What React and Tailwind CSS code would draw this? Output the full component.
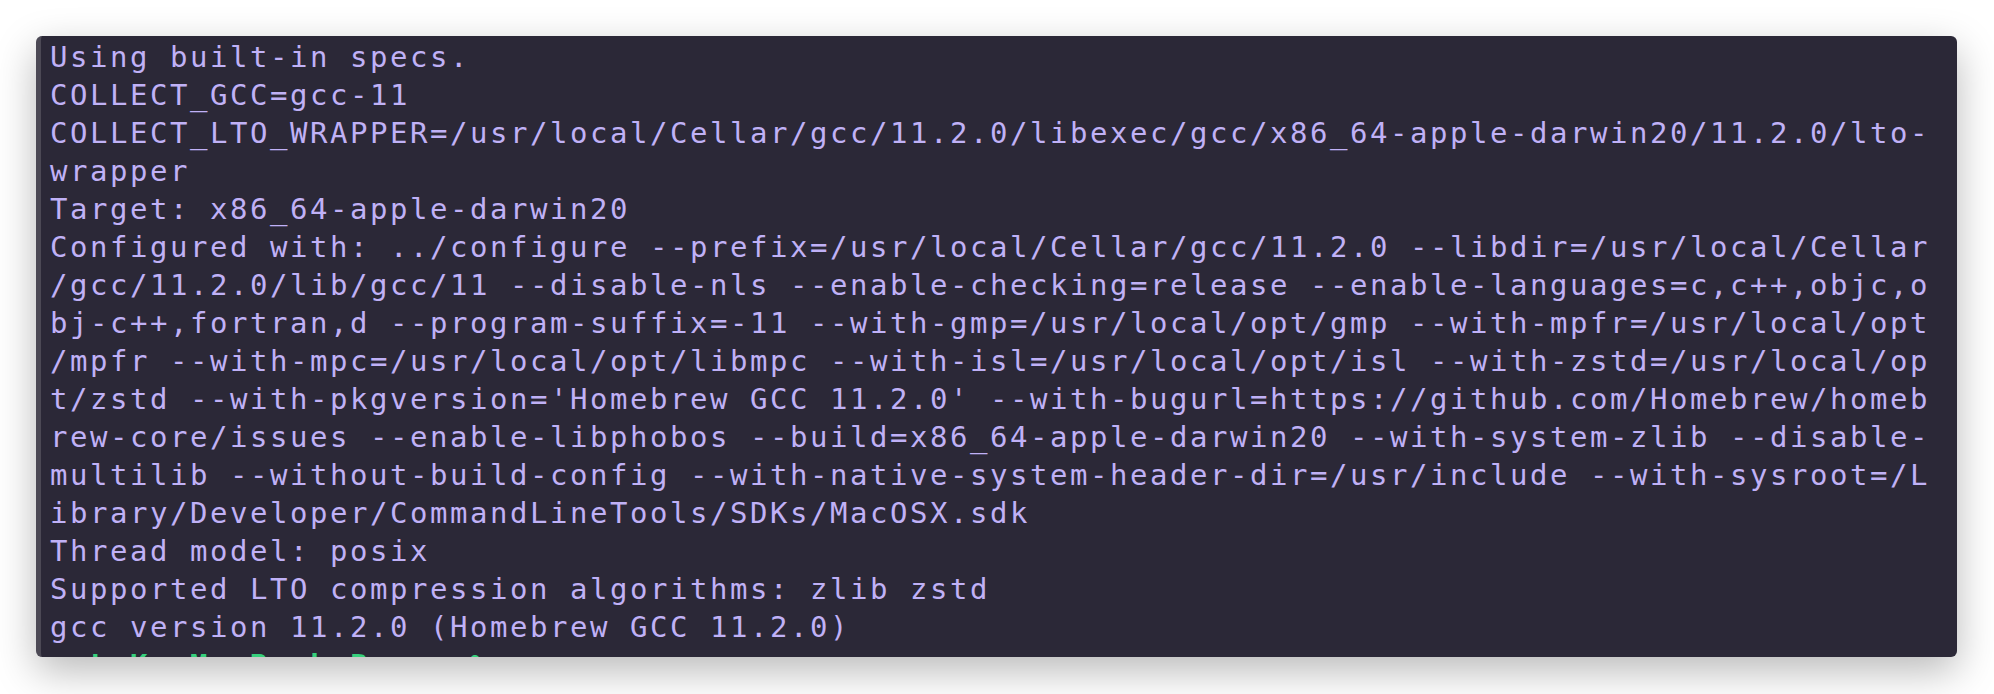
const lines = [
  'Using built-in specs.',
  'COLLECT_GCC=gcc-11',
  'COLLECT_LTO_WRAPPER=/usr/local/Cellar/gcc/11.2.0/libexec/gcc/x86_64-apple-darwin20/11.2.0/lto-',
  'wrapper',
  'Target: x86_64-apple-darwin20',
  'Configured with: ../configure --prefix=/usr/local/Cellar/gcc/11.2.0 --libdir=/usr/local/Cellar',
  '/gcc/11.2.0/lib/gcc/11 --disable-nls --enable-checking=release --enable-languages=c,c++,objc,o',
  'bj-c++,fortran,d --program-suffix=-11 --with-gmp=/usr/local/opt/gmp --with-mpfr=/usr/local/opt',
  '/mpfr --with-mpc=/usr/local/opt/libmpc --with-isl=/usr/local/opt/isl --with-zstd=/usr/local/op',
  "t/zstd --with-pkgversion='Homebrew GCC 11.2.0' --with-bugurl=https://github.com/Homebrew/homeb",
  'rew-core/issues --enable-libphobos --build=x86_64-apple-darwin20 --with-system-zlib --disable-',
  'multilib --without-build-config --with-native-system-header-dir=/usr/include --with-sysroot=/L',
  'ibrary/Developer/CommandLineTools/SDKs/MacOSX.sdk',
  'Thread model: posix',
  'Supported LTO compression algorithms: zlib zstd',
  'gcc version 11.2.0 (Homebrew GCC 11.2.0)',
];

export default function App() {
  return (
    <div className="min-h-screen bg-white pt-[36px] pl-[36px]">
      <div className="w-[1921px] h-[621px] overflow-hidden rounded-[6px] bg-[#2b2837] border-l-[5px] border-[#4c4955] shadow-[0_14px_40px_rgba(0,0,0,0.28)]">
        <div className="pl-[9px] pt-[2px] font-['DejaVu_Sans_Mono',monospace] text-[29px] leading-[38px] tracking-[2.54px] text-[#c0b1f6] whitespace-pre">
          {lines.map((line, i) => (
            <div key={i}>{line}</div>
          ))}
          <div className="font-bold text-[#36d07c]">{'➜ LoKs-MacBook-Pro ~ %'}</div>
        </div>
      </div>
    </div>
  );
}
